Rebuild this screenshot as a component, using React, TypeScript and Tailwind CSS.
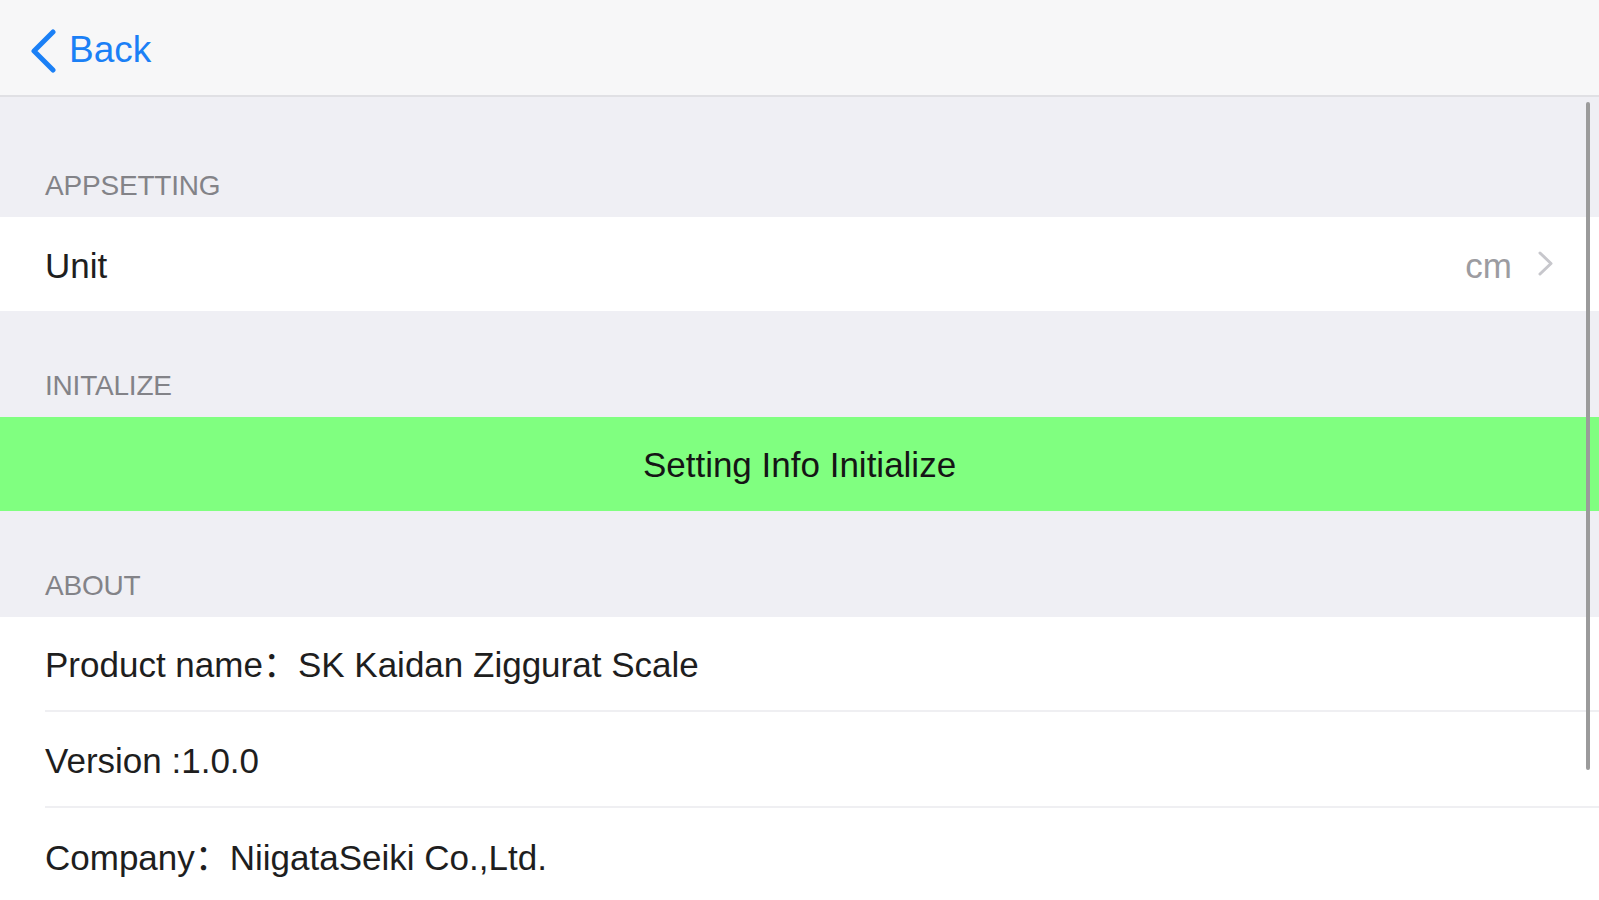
import React from 'react';

const FONT = "font-['Liberation_Sans','Noto_Sans_CJK_SC',sans-serif]";

const SectionHeader: React.FC<{ title: string; first?: boolean }> = ({ title, first }) => (
  <div className={`${first ? 'h-[120px]' : 'h-[106px]'} flex items-end pl-[45px] pb-[15px] bg-[#efeff4]`}>
    <span className="text-[28px] leading-[32px] text-[#838388] tracking-[-0.2px]">{title}</span>
  </div>
);

const InfoRow: React.FC<{ children: React.ReactNode; height: string; separator?: boolean }> = ({
  children,
  height,
  separator,
}) => (
  <div className={`${height} flex flex-col bg-white`}>
    <div className="flex-1 flex items-center pl-[45px] pt-[4px] text-[35px] text-[#1e1e1e]">{children}</div>
    {separator && <div className="ml-[45px] h-[2px] bg-[#efeff2]" />}
  </div>
);

const App: React.FC = () => {
  return (
    <div className={`relative h-[900px] w-full overflow-hidden bg-white ${FONT}`}>
      {/* Navigation bar */}
      <header className="h-[97px] flex items-center pl-[29px] pt-[4px] bg-[#f7f7f8] border-b-[2px] border-[#e0e0e4]">
        <button className="flex items-center text-[#1b80f6]">
          <svg width="28" height="44" viewBox="0 0 28 44" fill="none" className="mt-[2px]">
            <path d="M24 3 L5 22 L24 41" stroke="currentColor" strokeWidth="5" strokeLinecap="round" strokeLinejoin="round" />
          </svg>
          <span className="ml-[12px] text-[37px] leading-none">Back</span>
        </button>
      </header>

      {/* App setting */}
      <SectionHeader title="APPSETTING" first />
      <div className="h-[94px] flex items-center justify-between pl-[45px] pr-[46px] pt-[4px] bg-white">
        <span className="text-[35px] text-[#1e1e1e]">Unit</span>
        <div className="flex items-center gap-[26px]">
          <span className="text-[35px] text-[#9c9ca1]">cm</span>
          <svg width="15" height="25" viewBox="0 0 15 25" fill="none" className="-mt-[6px]">
            <path d="M2 2 L13 12.5 L2 23" stroke="#c7c7cc" strokeWidth="3" strokeLinecap="round" strokeLinejoin="round" />
          </svg>
        </div>
      </div>

      {/* Initialize */}
      <SectionHeader title="INITALIZE" />
      <button className="h-[94px] w-full flex items-center justify-center pt-[2px] bg-[#80ff80] text-[35px] text-[#151515]">
        Setting Info Initialize
      </button>

      {/* About */}
      <SectionHeader title="ABOUT" />
      <InfoRow height="h-[95px]" separator>
        Product name：SK Kaidan Ziggurat Scale
      </InfoRow>
      <InfoRow height="h-[96px]" separator>
        Version :1.0.0
      </InfoRow>
      <InfoRow height="h-[96px]">Company：NiigataSeiki Co.,Ltd.</InfoRow>

      {/* Scroll indicator */}
      <div className="absolute right-[9px] top-[102px] w-[4px] h-[668px] rounded-full bg-[#9b9b9b]" />
    </div>
  );
};

export default App;
